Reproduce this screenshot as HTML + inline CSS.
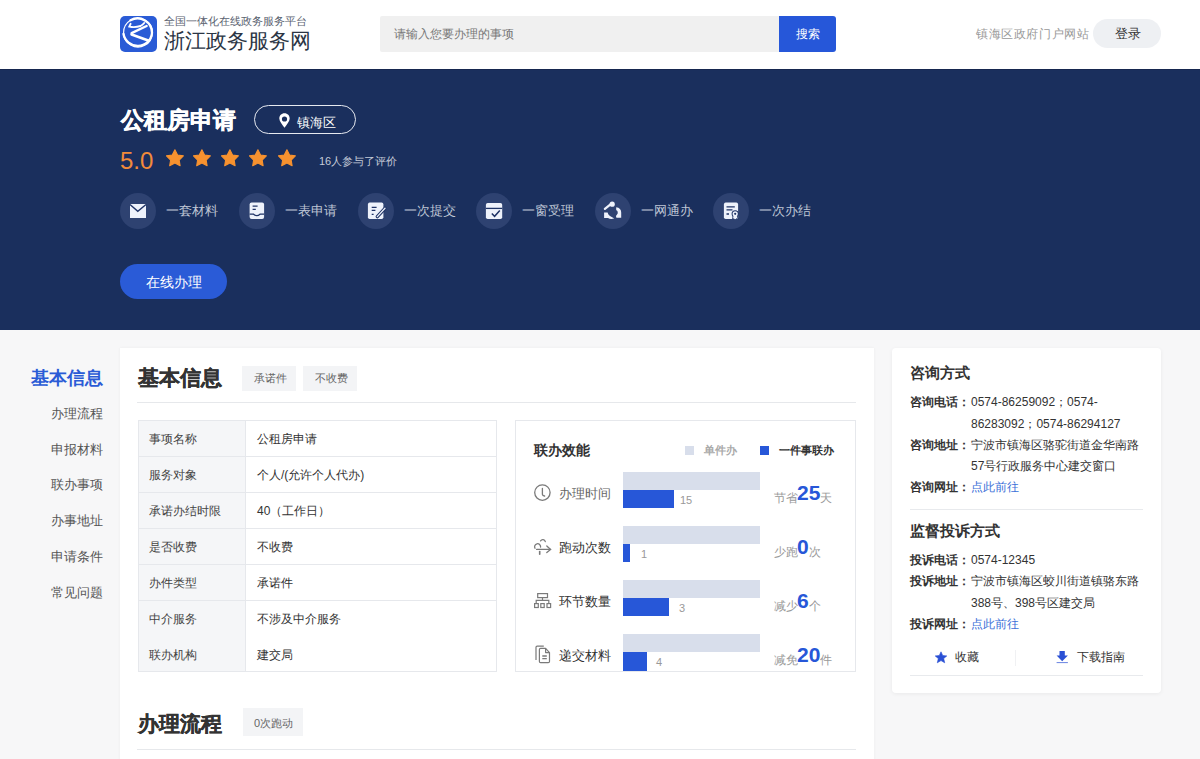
<!DOCTYPE html>
<html><head><meta charset="utf-8">
<style>
*{margin:0;padding:0;box-sizing:border-box}
html,body{width:1200px;height:759px;overflow:hidden}
body{font-family:"Liberation Sans",sans-serif;background:#f7f7f8;position:relative;color:#333}
.abs{position:absolute}
.t{position:absolute;white-space:nowrap;line-height:1}
/* header */
#hdr{position:absolute;left:0;top:0;width:1200px;height:69px;background:#fff}
#logo{left:120px;top:16px;width:37px;height:36px;background:#2a5bd6;border-radius:5px}
#search{left:380px;top:16px;width:399px;height:36px;background:#f0f0f0;border-radius:2px 0 0 2px}
#sbtn{left:779px;top:16px;width:57px;height:36px;background:#2657d9;border-radius:0 3px 3px 0}
#login{left:1093px;top:19px;width:68px;height:29px;background:#eef0f3;border-radius:15px}
/* banner */
#ban{position:absolute;left:0;top:69px;width:1200px;height:261px;background:#1a2f5d;border-top:1px solid #16274f}
#loc{left:254px;top:105px;width:102px;height:29px;border:1px solid #e6e9f0;border-radius:15px}
.circ{position:absolute;top:192px;width:36px;height:36px;border-radius:50%;background:rgba(255,255,255,0.12)}
#go{left:120px;top:264px;width:107px;height:35px;background:#2a5bd7;border-radius:18px}
/* content */
#main{left:120px;top:348px;width:754px;height:420px;background:#fff;box-shadow:0 0 3px rgba(0,0,0,0.05)}
#side{left:892px;top:348px;width:269px;height:345px;background:#fff;border-radius:4px;box-shadow:0 1px 4px rgba(0,0,0,0.06)}
.tag{position:absolute;background:#f3f4f6;color:#666}

.nav{right:1097px;font-size:13px;color:#555;text-align:right}
.hl{left:139px;width:357px;height:1px;background:#e6e8ec}
.tl{left:149px;font-size:12px;color:#444}
.tv{left:257px;font-size:12px;color:#333}
.gbar{left:623px;width:137px;height:18px;background:#d8deeb}
.bbar{left:623px;height:18px;background:#2757d8}
.num{font-size:11px;color:#999}
.cl{left:559px;font-size:13px;color:#333}
.cr{left:774px;font-size:12px;color:#999}
.cr b{font-size:21px;color:#2757d8;font-weight:bold;position:relative;top:-2px;margin-left:-1px}
.sl{left:910px;font-size:12px;font-weight:bold;color:#333}
.sv{left:971px;font-size:12px;color:#333}
</style></head><body>
<div id="hdr"></div>
<svg class="abs" style="left:120px;top:16px" width="37" height="36" viewBox="0 0 37 36">
<rect x="0" y="0" width="37" height="36" rx="5" fill="#2a5bd6"/>
<g fill="none" stroke="#fff" stroke-linecap="round">
<path d="M10.5 4.3 A14.4 14.4 0 1 0 12 3.5" stroke-width="1.2"/>
<path d="M10.5 4.3 A14.4 14.4 0 0 1 32 17 A14.4 14.4 0 0 1 3.5 18" stroke-width="2.3"/>
<path d="M10.6 7.8 L9.3 10.6 Q15 11.8 20.5 10 Q22.8 8.8 24.2 7" stroke-width="1.9"/>
<path d="M26.6 10 L11.6 17.1" stroke-width="2.4"/>
<path d="M11.6 18.4 L28.2 24.6" stroke-width="2.7"/>
</g></svg>
<div class="t" style="left:164px;top:16px;font-size:11px;color:#5a6270">全国一体化在线政务服务平台</div>
<div class="t" style="left:164px;top:30px;font-size:21px;font-weight:500;color:#2b3544">浙江政务服务网</div>
<div id="search" class="abs"></div>
<div class="t" style="left:394px;top:28px;font-size:12px;color:#777">请输入您要办理的事项</div>
<div id="sbtn" class="abs"></div>
<div class="t" style="left:796px;top:28px;font-size:12px;color:#fff">搜索</div>
<div class="t" style="left:976px;top:28px;font-size:12px;letter-spacing:0.6px;color:#999">镇海区政府门户网站</div>
<div id="login" class="abs"></div>
<div class="t" style="left:1115px;top:28px;font-size:12.6px;color:#333">登录</div>

<div id="ban"></div>
<div class="t" style="left:121px;top:109px;font-size:23px;font-weight:bold;color:#fff;-webkit-text-stroke:0.5px #fff">公租房申请</div>
<div id="loc" class="abs"></div>
<svg class="abs" style="left:279px;top:113px" width="11" height="15" viewBox="0 0 11 15">
<path d="M5.5 0.3 C8.6 0.3 10.7 2.6 10.7 5.6 C10.7 8.6 7.6 11.8 5.5 14.8 C3.4 11.8 0.3 8.6 0.3 5.6 C0.3 2.6 2.4 0.3 5.5 0.3 Z M5.5 3.4 A2.6 2.6 0 1 0 5.5 8.6 A2.6 2.6 0 1 0 5.5 3.4 Z" fill="#fff" fill-rule="evenodd"/></svg>
<div class="t" style="left:297px;top:116px;font-size:13px;color:#fff">镇海区</div>
<div class="t" style="left:120px;top:149px;font-size:24px;color:#f28b3a">5.0</div>
<svg class="abs" style="left:165.5px;top:149.3px" width="18" height="18" viewBox="0 0 18 18"><path d="M8.90 0.70 L11.55 5.96 L17.36 6.85 L13.18 10.99 L14.13 16.80 L8.90 14.10 L3.67 16.80 L4.62 10.99 L0.44 6.85 L6.25 5.96 Z" fill="#f7922f" stroke="#f7922f" stroke-width="1.1" stroke-linejoin="round"/></svg>
<svg class="abs" style="left:193.3px;top:149.3px" width="18" height="18" viewBox="0 0 18 18"><path d="M8.90 0.70 L11.55 5.96 L17.36 6.85 L13.18 10.99 L14.13 16.80 L8.90 14.10 L3.67 16.80 L4.62 10.99 L0.44 6.85 L6.25 5.96 Z" fill="#f7922f" stroke="#f7922f" stroke-width="1.1" stroke-linejoin="round"/></svg>
<svg class="abs" style="left:221.1px;top:149.3px" width="18" height="18" viewBox="0 0 18 18"><path d="M8.90 0.70 L11.55 5.96 L17.36 6.85 L13.18 10.99 L14.13 16.80 L8.90 14.10 L3.67 16.80 L4.62 10.99 L0.44 6.85 L6.25 5.96 Z" fill="#f7922f" stroke="#f7922f" stroke-width="1.1" stroke-linejoin="round"/></svg>
<svg class="abs" style="left:249.3px;top:149.3px" width="18" height="18" viewBox="0 0 18 18"><path d="M8.90 0.70 L11.55 5.96 L17.36 6.85 L13.18 10.99 L14.13 16.80 L8.90 14.10 L3.67 16.80 L4.62 10.99 L0.44 6.85 L6.25 5.96 Z" fill="#f7922f" stroke="#f7922f" stroke-width="1.1" stroke-linejoin="round"/></svg>
<svg class="abs" style="left:277.5px;top:149.3px" width="18" height="18" viewBox="0 0 18 18"><path d="M8.90 0.70 L11.55 5.96 L17.36 6.85 L13.18 10.99 L14.13 16.80 L8.90 14.10 L3.67 16.80 L4.62 10.99 L0.44 6.85 L6.25 5.96 Z" fill="#f7922f" stroke="#f7922f" stroke-width="1.1" stroke-linejoin="round"/></svg>
<div class="t" style="left:319px;top:156px;font-size:11px;color:#c5cbd8">16人参与了评价</div>
<svg class="abs" style="left:120px;top:193px" width="36" height="36" viewBox="0 0 36 36"><circle cx="18" cy="18" r="18" fill="#2e4271"/><rect x="10" y="11" width="16" height="14" fill="#eef2fb"/><path d="M10 11.5 L17.8 18.3 L26 11.5" fill="none" stroke="#1f3366" stroke-width="1.4"/></svg>
<svg class="abs" style="left:239px;top:193px" width="36" height="36" viewBox="0 0 36 36"><circle cx="18" cy="18" r="18" fill="#2e4271"/><rect x="10.6" y="9.6" width="14.5" height="16.4" rx="2" fill="#eef2fb"/><path d="M13.6 13.2 H18.6 M13.6 16.3 H16.8" stroke="#1f3366" stroke-width="1.3"/><path d="M10.6 21.2 H14.6 Q17.8 24.2 21 21.2 H25.1" fill="none" stroke="#1f3366" stroke-width="1.2"/></svg>
<svg class="abs" style="left:358px;top:193px" width="36" height="36" viewBox="0 0 36 36"><circle cx="18" cy="18" r="18" fill="#2e4271"/><rect x="9.9" y="9.6" width="15.5" height="16.4" rx="1.8" fill="#eef2fb"/><path d="M13.7 14.4 H18.6 M13.7 17.3 H17.4 M13.7 21.4 H15.6" stroke="#1f3366" stroke-width="1.3"/><path d="M19.3 23.6 L27 15.3" stroke="#1f3366" stroke-width="3.4" stroke-linecap="round"/><path d="M19.3 23.6 L27 15.3" stroke="#eef2fb" stroke-width="1.3" stroke-linecap="round"/></svg>
<svg class="abs" style="left:476px;top:193px" width="36" height="36" viewBox="0 0 36 36"><circle cx="18" cy="18" r="18" fill="#2e4271"/><rect x="9.9" y="9.9" width="16.3" height="16.1" rx="1.8" fill="#eef2fb"/><path d="M9.9 15.4 H26.2" stroke="#1f3366" stroke-width="1.3"/><path d="M15.8 20.4 L18.6 23.3 L23.8 17.6" fill="none" stroke="#1f3366" stroke-width="1.5"/></svg>
<svg class="abs" style="left:595px;top:193px" width="36" height="36" viewBox="0 0 36 36"><circle cx="18" cy="18" r="18" fill="#2e4271"/><g fill="#eef2fb"><circle cx="17.2" cy="11.2" r="2.6"/><path d="M15.8 11.2 L9.9 15.8" stroke="#eef2fb" stroke-width="2.3" stroke-linecap="round"/><path d="M9.1 19.6 H12.6 Q13.6 23.2 17.6 24.4 L19.2 25.6 Q15.2 26.7 13 24.9 H9.1 Z"/><path d="M21.2 14.3 Q26.2 15 26.2 19.6 V24.7 H21.4 Q20.6 22.6 22.7 20.6 Q23 17.6 21.2 17.3 Z"/></g></svg>
<svg class="abs" style="left:713px;top:193px" width="36" height="36" viewBox="0 0 36 36"><circle cx="18" cy="18" r="18" fill="#2e4271"/><rect x="10.9" y="9.6" width="14.2" height="16.4" rx="1.8" fill="#eef2fb"/><path d="M13.5 13.9 H21.8 M13.5 16.9 H19.5 M13.5 21 H16" stroke="#1f3366" stroke-width="1.3"/><circle cx="22.2" cy="20.8" r="3.6" fill="#1f3366"/><path d="M20.2 22.5 L19.3 26.6 L21 25.6 L22.2 26.8 L23.4 25.6 L25.1 26.6 L24.2 22.5 Z" fill="#eef2fb" stroke="#1f3366" stroke-width="0.8"/><circle cx="22.2" cy="20.8" r="2.6" fill="#eef2fb"/><circle cx="22.2" cy="20.8" r="1.1" fill="#1f3366"/></svg>
<div class="t" style="left:166px;top:204px;font-size:13px;color:#bfc6d5">一套材料</div>
<div class="t" style="left:285px;top:204px;font-size:13px;color:#bfc6d5">一表申请</div>
<div class="t" style="left:404px;top:204px;font-size:13px;color:#bfc6d5">一次提交</div>
<div class="t" style="left:522px;top:204px;font-size:13px;color:#bfc6d5">一窗受理</div>
<div class="t" style="left:641px;top:204px;font-size:13px;color:#bfc6d5">一网通办</div>
<div class="t" style="left:759px;top:204px;font-size:13px;color:#bfc6d5">一次办结</div>
<div id="go" class="abs"></div>
<div class="t" style="left:146px;top:275px;font-size:14px;color:#fff">在线办理</div>

<div id="main" class="abs"></div>
<div id="side" class="abs"></div>

<!-- left nav -->
<div class="t" style="left:31px;top:369px;font-size:18px;font-weight:bold;color:#2a5bd6">基本信息</div>
<div class="t nav" style="top:407px">办理流程</div>
<div class="t nav" style="top:443px">申报材料</div>
<div class="t nav" style="top:478px">联办事项</div>
<div class="t nav" style="top:514px">办事地址</div>
<div class="t nav" style="top:550px">申请条件</div>
<div class="t nav" style="top:586px">常见问题</div>

<!-- main card -->
<div class="t" style="left:138px;top:367px;font-size:21px;font-weight:bold;color:#333;-webkit-text-stroke:0.3px #333">基本信息</div>
<div class="tag" style="left:242px;top:366px;width:54px;height:25px"></div>
<div class="t" style="left:254px;top:373px;font-size:11px;color:#666">承诺件</div>
<div class="tag" style="left:303px;top:366px;width:54px;height:25px"></div>
<div class="t" style="left:315px;top:373px;font-size:11px;color:#666">不收费</div>
<div class="abs" style="left:137px;top:402px;width:719px;height:1px;background:#e6e8eb"></div>

<div class="abs" style="left:138px;top:420px;width:359px;height:252px;border:1px solid #e6e8ec"></div>
<div class="abs" style="left:139px;top:421px;width:107px;height:250px;background:#f5f6f8;border-right:1px solid #e6e8ec"></div>
<div class="abs hl" style="top:456px"></div>
<div class="abs hl" style="top:492px"></div>
<div class="abs hl" style="top:528px"></div>
<div class="abs hl" style="top:564px"></div>
<div class="abs hl" style="top:600px"></div>
<div class="t tl" style="top:433px">事项名称</div><div class="t tv" style="top:433px">公租房申请</div>
<div class="t tl" style="top:469px">服务对象</div><div class="t tv" style="top:469px">个人/(允许个人代办)</div>
<div class="t tl" style="top:505px">承诺办结时限</div><div class="t tv" style="top:505px">40（工作日）</div>
<div class="t tl" style="top:541px">是否收费</div><div class="t tv" style="top:541px">不收费</div>
<div class="t tl" style="top:577px">办件类型</div><div class="t tv" style="top:577px">承诺件</div>
<div class="t tl" style="top:613px">中介服务</div><div class="t tv" style="top:613px">不涉及中介服务</div>
<div class="t tl" style="top:649px">联办机构</div><div class="t tv" style="top:649px">建交局</div>

<!-- chart -->
<div class="abs" style="left:515px;top:420px;width:341px;height:252px;border:1px solid #e6e8ec"></div>
<div class="t" style="left:534px;top:443px;font-size:14px;font-weight:bold;color:#333">联办效能</div>
<div class="abs" style="left:685px;top:446px;width:9px;height:9px;background:#d8deeb"></div>
<div class="t" style="left:704px;top:445px;font-size:11px;font-weight:bold;color:#aaa">单件办</div>
<div class="abs" style="left:760px;top:446px;width:9px;height:9px;background:#2757d8"></div>
<div class="t" style="left:779px;top:445px;font-size:11px;font-weight:bold;color:#333">一件事联办</div>

<div class="abs gbar" style="top:472px"></div><div class="abs bbar" style="top:490px;width:51px"></div>
<div class="abs gbar" style="top:526px"></div><div class="abs bbar" style="top:544px;width:7px"></div>
<div class="abs gbar" style="top:580px"></div><div class="abs bbar" style="top:598px;width:46px"></div>
<div class="abs gbar" style="top:634px"></div><div class="abs bbar" style="top:652px;width:24px;height:19px"></div>
<div class="t num" style="left:680px;top:495px">15</div>
<div class="t num" style="left:641px;top:549px">1</div>
<div class="t num" style="left:679px;top:603px">3</div>
<div class="t num" style="left:656px;top:657px">4</div>

<svg class="abs" style="left:528px;top:480px" width="30" height="30" viewBox="0 0 30 30" fill="none" stroke="#7a7a7a" stroke-width="1.3" stroke-linecap="round">
<circle cx="14.4" cy="12.6" r="7.7"/><path d="M14.4 8.3 V14.3 Q14.6 15.6 16.6 16"/></svg>
<svg class="abs" style="left:528px;top:534px" width="30" height="30" viewBox="0 0 30 30" fill="none" stroke="#7a7a7a" stroke-width="1.3" stroke-linecap="round">
<path d="M7 14.2 A3 3 0 1 1 12.6 13"/><path d="M12.6 6.9 A2.6 2.6 0 0 1 17.3 7.6"/><path d="M8.6 15.4 H22.5"/><path d="M18.8 12 L22.6 15.4 L18.8 18.6"/><path d="M11.7 17.6 V20.3" stroke-width="1.6"/></svg>
<svg class="abs" style="left:528px;top:588px" width="30" height="30" viewBox="0 0 30 30" fill="none" stroke="#7a7a7a" stroke-width="1.2">
<rect x="9.7" y="5.6" width="9.8" height="4"/><path d="M14.5 9.6 V12.3 M8.2 15 V12.3 H20.8 V15"/><rect x="6.6" y="15.6" width="3.7" height="3.9"/><rect x="12.8" y="15.6" width="3.4" height="3.9"/><rect x="19" y="15.6" width="3.6" height="3.9"/></svg>
<svg class="abs" style="left:528px;top:640px" width="30" height="30" viewBox="0 0 30 30" fill="none" stroke="#7a7a7a" stroke-width="1.2" stroke-linejoin="round">
<path d="M8 20 V7.3 Q8 6.2 9.2 6.2 H15.8"/><path d="M11.4 9.6 Q11.4 8.4 12.6 8.4 H17.6 L21.5 12.6 V21.4 Q21.5 22.6 20.3 22.6 H12.6 Q11.4 22.6 11.4 21.4 Z"/><path d="M17.6 8.4 V12.6 H21.5"/><path d="M14.3 16 H18.8 M14.3 18.6 H18.8" stroke-width="1.3"/></svg>
<div class="t cl" style="top:487px;color:#666">办理时间</div>
<div class="t cl" style="top:541px">跑动次数</div>
<div class="t cl" style="top:595px">环节数量</div>
<div class="t cl" style="top:649px">递交材料</div>
<div class="t cr" style="top:484px">节省<b>25</b>天</div>
<div class="t cr" style="top:538px">少跑<b>0</b>次</div>
<div class="t cr" style="top:592px">减少<b>6</b>个</div>
<div class="t cr" style="top:646px">减免<b>20</b>件</div>

<!-- bottom section -->
<div class="t" style="left:138px;top:713px;font-size:21px;font-weight:bold;color:#333;-webkit-text-stroke:0.3px #333">办理流程</div>
<div class="tag" style="left:243px;top:708px;width:60px;height:28px"></div>
<div class="t" style="left:254px;top:718px;font-size:11px;color:#666">0次跑动</div>
<div class="abs" style="left:137px;top:749px;width:719px;height:1px;background:#e6e8eb"></div>

<!-- side card -->
<div class="t" style="left:910px;top:365px;font-size:15px;font-weight:bold;color:#333">咨询方式</div>
<div class="t sl" style="top:396px">咨询电话：</div><div class="t sv" style="top:396px">0574-86259092；0574-</div>
<div class="t sv" style="top:418px">86283092；0574-86294127</div>
<div class="t sl" style="top:439px">咨询地址：</div><div class="t sv" style="top:439px">宁波市镇海区骆驼街道金华南路</div>
<div class="t sv" style="top:460px">57号行政服务中心建交窗口</div>
<div class="t sl" style="top:481px">咨询网址：</div><div class="t sv" style="top:481px;color:#3b6fd8">点此前往</div>
<div class="abs" style="left:910px;top:509px;width:233px;height:1px;background:#e8eaed"></div>
<div class="t" style="left:910px;top:523px;font-size:15px;font-weight:bold;color:#333">监督投诉方式</div>
<div class="t sl" style="top:554px">投诉电话：</div><div class="t sv" style="top:554px">0574-12345</div>
<div class="t sl" style="top:575px">投诉地址：</div><div class="t sv" style="top:575px">宁波市镇海区蛟川街道镇骆东路</div>
<div class="t sv" style="top:597px">388号、398号区建交局</div>
<div class="t sl" style="top:618px">投诉网址：</div><div class="t sv" style="top:618px;color:#3b6fd8">点此前往</div>
<svg class="abs" style="left:934px;top:651px" width="14" height="13" viewBox="0 0 14 13"><path d="M7 0.8 L8.7 4.5 L12.8 4.9 L9.7 7.6 L10.7 11.8 L7 9.6 L3.3 11.8 L4.3 7.6 L1.2 4.9 L5.3 4.5 Z" fill="#2a50d5" stroke="#2a50d5" stroke-width="0.6" stroke-linejoin="round"/></svg>
<svg class="abs" style="left:1056px;top:651px" width="13" height="13" viewBox="0 0 13 13"><path d="M3.5 0 H8.8 V4.5 H11.9 L6.2 10.3 L0.6 4.5 H3.5 Z" fill="#2a50d5"/><path d="M0.6 11.6 H11.9" stroke="#2a50d5" stroke-width="1" opacity="0.7"/></svg>
<div class="t" style="left:955px;top:651px;font-size:12px;color:#333">收藏</div>
<div class="t" style="left:1077px;top:651px;font-size:12px;color:#333">下载指南</div>
<div class="abs" style="left:1015px;top:650px;width:1px;height:16px;background:#f0f1f3"></div>
<div class="abs" style="left:910px;top:675px;width:233px;height:1px;background:#e8eaed"></div>
</body></html>
